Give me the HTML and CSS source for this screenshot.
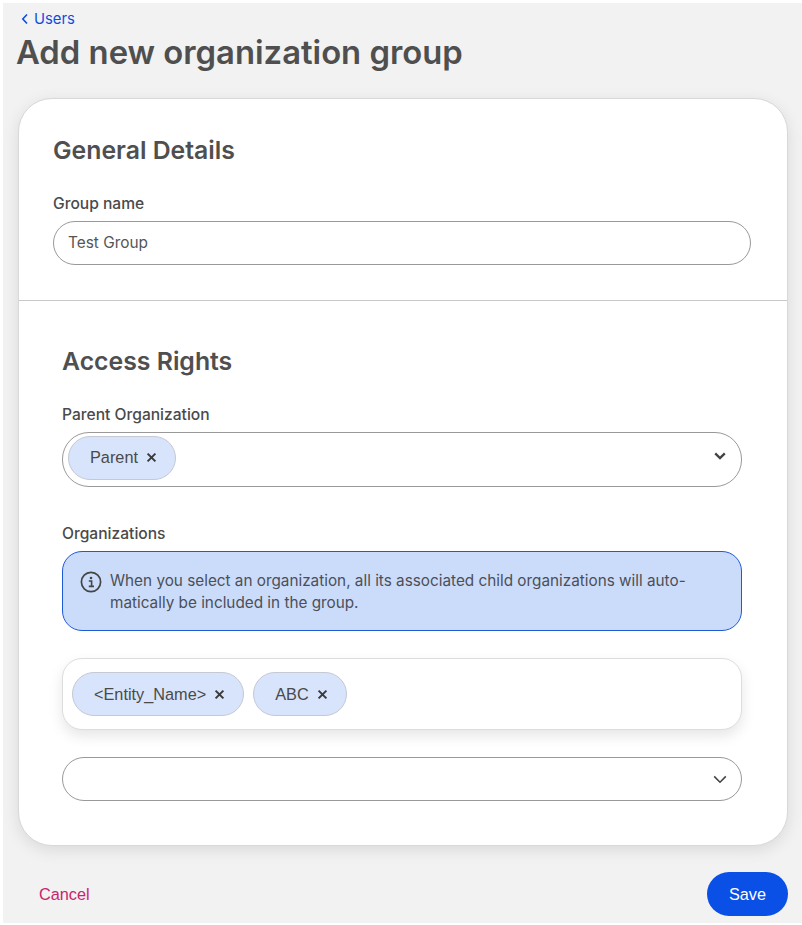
FILE: index.html
```html
<!DOCTYPE html>
<html lang="en">
<head>
  <meta charset="UTF-8">
  <meta name="viewport" content="width=device-width, initial-scale=1.0">
  <title>Add new organization group</title>
  <link rel="stylesheet" href="styles.css">
</head>
<body>
  <div class="page">
    <a class="back-link" href="#">
      <svg class="back-icon" width="8" height="12" viewBox="0 0 8 12"><path d="M6 1.5 L1.8 6 L6 10.5" fill="none" stroke="#0a4fe0" stroke-width="1.6"/></svg>
      Users
    </a>
    <h1 class="page-title">Add new organization group</h1>

    <div class="card">
      <section class="general">
        <h2 class="section-title">General Details</h2>
        <label class="field-label">Group name</label>
        <div class="input">Test Group</div>
      </section>

      <section class="access">
        <h2 class="section-title">Access Rights</h2>
        <label class="field-label">Parent Organization</label>
        <div class="select select-parent">
          <span class="tag">Parent <svg class="tag-x" width="11" height="11" viewBox="0 0 11 11"><path d="M1.6 1.6 L9.4 9.4 M9.4 1.6 L1.6 9.4" stroke="#3a3a3a" stroke-width="2"/></svg></span>
          <svg class="chevron" width="12" height="8" viewBox="0 0 12 8"><path d="M1.2 1.4 L6 6 L10.8 1.4" fill="none" stroke="#444" stroke-width="2.4"/></svg>
        </div>

        <label class="field-label org-label">Organizations</label>
        <div class="notice">
          <svg class="notice-icon" width="22" height="22" viewBox="0 0 22 22">
            <circle cx="11" cy="11" r="9.6" fill="none" stroke="#444" stroke-width="1.7"/>
            <circle cx="11" cy="7" r="1.3" fill="#444"/>
            <path d="M8.8 10 H11.6 V15.2 M8.8 15.4 H14" fill="none" stroke="#444" stroke-width="1.6"/>
          </svg>
          <p class="notice-text">When you select an organization, all its associated child organizations will auto-<br>matically be included in the group.</p>
        </div>

        <div class="tag-box">
          <span class="tag">&lt;Entity_Name&gt; <svg class="tag-x" width="11" height="11" viewBox="0 0 11 11"><path d="M1.6 1.6 L9.4 9.4 M9.4 1.6 L1.6 9.4" stroke="#3a3a3a" stroke-width="2"/></svg></span>
          <span class="tag">ABC <svg class="tag-x" width="11" height="11" viewBox="0 0 11 11"><path d="M1.6 1.6 L9.4 9.4 M9.4 1.6 L1.6 9.4" stroke="#3a3a3a" stroke-width="2"/></svg></span>
        </div>

        <div class="select select-empty">
          <svg class="chevron" width="14" height="9" viewBox="0 0 14 9"><path d="M1.2 1.4 L7 7.2 L12.8 1.4" fill="none" stroke="#444" stroke-width="1.6"/></svg>
        </div>
      </section>
    </div>

    <div class="footer">
      <a class="cancel" href="#">Cancel</a>
      <button class="save">Save</button>
    </div>
  </div>
</body>
</html>
```

FILE: styles.css
```css
* {
  box-sizing: border-box;
}
body {
  margin: 0;
  background-color: #fff;
  font-family: Inter, "Liberation Sans", sans-serif;
  color: #4a4a4a;
}
.page {
  margin: 3px 0 0 3px;
  height: 920px;
  background-color: #f2f2f2;
  padding: 7px 14px 0 14px;
  overflow: hidden;
}
.back-link {
  display: flex;
  align-items: center;
  gap: 5px;
  margin-left: 4px;
  height: 18px;
  font-size: 14.8px;
  color: #0a4fe0;
  text-decoration: none;
}
.page-title {
  margin: 3px 0 0 -1px;
  height: 42px;
  font-size: 32.8px;
  line-height: 42px;
  font-weight: 600;
  color: #4f4f4f;
}
.card {
  margin: 25px 0 0 1px;
  height: 748px;
  background-color: #fff;
  border: 1px solid #d8d8d8;
  border-radius: 34px;
  box-shadow: 0 4px 16px rgba(0, 0, 0, 0.1);
}
.general {
  height: 202px;
  padding: 36px 36px 0 34px;
  border-bottom: 1px solid #c8c8c8;
}
.access {
  padding: 45px 45px 0 43px;
}
.section-title {
  margin: 0;
  height: 30px;
  font-size: 24.8px;
  line-height: 30px;
  font-weight: 600;
  color: #4f4f4f;
}
.field-label {
  display: block;
  margin-top: 30px;
  height: 18px;
  font-size: 15.6px;
  line-height: 18px;
  font-weight: 500;
  color: #4a4a4a;
}
.input {
  margin-top: 8px;
  height: 44px;
  padding: 0 14px;
  border: 1px solid #999;
  border-radius: 22px;
  font-size: 15.4px;
  line-height: 42px;
  color: #555;
}
.select {
  display: flex;
  align-items: center;
  justify-content: space-between;
  border: 1px solid #999;
  background-color: #fff;
}
.select-parent {
  margin-top: 8px;
  height: 55px;
  padding: 0 15px 4px 5px;
  border-radius: 27px;
}
.select-parent .chevron {
  margin-top: -3px;
}
.select-empty {
  margin-top: 27px;
  height: 44px;
  padding: 0 14px 0 5px;
  border-radius: 22px;
  justify-content: flex-end;
}
.tag {
  display: inline-flex;
  align-items: center;
  gap: 8px;
  height: 44px;
  padding: 0 18px 0 21px;
  background-color: #d8e4fb;
  border: 1px solid #c5c9d4;
  border-radius: 22px;
  font-family: "Liberation Sans", Arial, sans-serif;
  font-size: 16.3px;
  color: #4a4a4a;
}
.tag-x {
  flex: none;
}
.org-label {
  margin-top: 38px;
}
.notice {
  display: flex;
  gap: 8px;
  margin-top: 8px;
  height: 80px;
  padding: 18px 17px;
  background-color: #cbdcfb;
  border: 1px solid #1f5ad6;
  border-radius: 20px;
}
.notice-icon {
  flex: none;
  margin-top: 1px;
}
.notice-text {
  margin: 0;
  font-size: 15.3px;
  line-height: 22px;
  color: #4b4f57;
}
.tag-box {
  display: flex;
  align-items: center;
  gap: 9px;
  margin-top: 27px;
  height: 72px;
  padding: 0 9px;
  background-color: #fff;
  border: 1px solid #ddd;
  border-radius: 20px;
  box-shadow: 0 6px 14px rgba(0, 0, 0, 0.1);
}
.footer {
  display: flex;
  align-items: center;
  justify-content: space-between;
  margin: 26px 0 0 22px;
}
.cancel {
  font-family: "Liberation Sans", Arial, sans-serif;
  font-size: 16.3px;
  color: #c8246c;
  text-decoration: none;
}
.save {
  width: 81px;
  height: 44px;
  border: none;
  border-radius: 22px;
  background-color: #0a50e6;
  color: #fff;
  font-family: "Liberation Sans", Arial, sans-serif;
  font-size: 16.3px;
  font-weight: 400;
}
```
